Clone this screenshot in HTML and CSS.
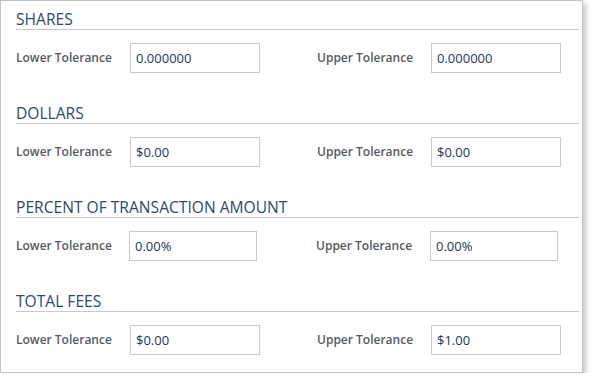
FILE: index.html
```html
<!DOCTYPE html>
<html>
<head>
<meta charset="utf-8">
<link rel="stylesheet" href="styles.css">
</head>
<body>
<div class="panel">
  <section class="group">
    <h2 class="group-title">SHARES</h2>
    <div class="row">
      <label class="lbl">Lower Tolerance</label>
      <div class="field">0.000000</div>
      <label class="lbl lbl-upper">Upper Tolerance</label>
      <div class="field">0.000000</div>
    </div>
  </section>
  <section class="group">
    <h2 class="group-title">DOLLARS</h2>
    <div class="row">
      <label class="lbl">Lower Tolerance</label>
      <div class="field">$0.00</div>
      <label class="lbl lbl-upper">Upper Tolerance</label>
      <div class="field">$0.00</div>
    </div>
  </section>
  <section class="group">
    <h2 class="group-title">PERCENT OF TRANSACTION AMOUNT</h2>
    <div class="row row-narrow">
      <label class="lbl">Lower Tolerance</label>
      <div class="field">0.00%</div>
      <label class="lbl lbl-upper">Upper Tolerance</label>
      <div class="field">0.00%</div>
    </div>
  </section>
  <section class="group">
    <h2 class="group-title">TOTAL FEES</h2>
    <div class="row">
      <label class="lbl">Lower Tolerance</label>
      <div class="field">$0.00</div>
      <label class="lbl lbl-upper">Upper Tolerance</label>
      <div class="field">$1.00</div>
    </div>
  </section>
</div>
</body>
</html>
```

FILE: styles.css
```css
html, body {
  margin: 0;
  padding: 0;
  background: #ffffff;
}

body {
  font-family: "Open Sans", "Noto Sans", sans-serif;
}

.panel {
  box-sizing: border-box;
  width: 583px;
  height: 373px;
  border: 1px solid #c4c4c4;
  box-shadow: 3px 3px 5px rgba(0, 0, 0, 0.22);
  padding: 8px 3px 0 15px;
  display: flex;
  flex-direction: column;
  gap: 30px;
}

.group {
  display: flex;
  flex-direction: column;
  gap: 13px;
}

.group-title {
  margin: 0;
  height: 20px;
  font-size: 15.6px;
  line-height: 20px;
  font-weight: 400;
  color: #2d4a69;
  border-bottom: 1px solid #c8c8c8;
}

.row {
  display: grid;
  grid-template-columns: 114px 130px 57px 114px 130px;
  height: 30px;
  align-items: center;
}

.row-narrow {
  grid-template-columns: 113px 128px 59px 114px 128px;
}

.lbl {
  font-size: 12px;
  line-height: 16px;
  font-weight: 600;
  color: #555a60;
  margin-top: -1px;
}

.lbl-upper {
  grid-column: 4;
}

.field {
  box-sizing: border-box;
  height: 30px;
  border: 1px solid #c9c9c9;
  padding: 0 5px;
  font-size: 13px;
  line-height: 28px;
  color: #1e3553;
}
```
